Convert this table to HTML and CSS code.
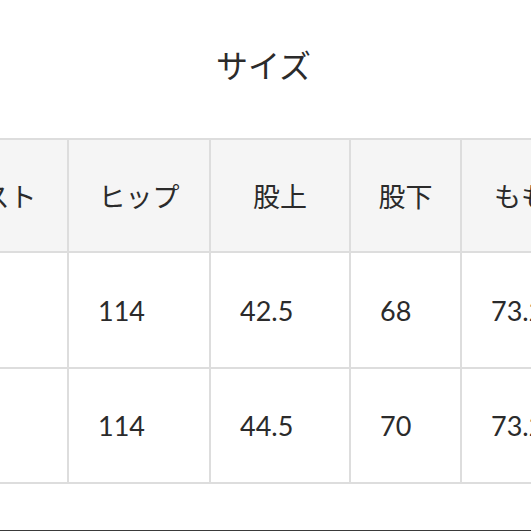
FILE: index.html
```html
<!DOCTYPE html>
<html lang="ja">
<head>
<meta charset="utf-8">
<title>サイズ</title>
<link rel="stylesheet" href="styles.css">
</head>
<body>
<div class="page">
  <h2 class="title">サイズ</h2>
  <div class="table-wrap">
    <div class="size-table">
      <div class="cell head">バスト</div>
      <div class="cell head">ヒップ</div>
      <div class="cell head">股上</div>
      <div class="cell head">股下</div>
      <div class="cell head">もも周り</div>

      <div class="cell">96</div>
      <div class="cell">114</div>
      <div class="cell">42.5</div>
      <div class="cell">68</div>
      <div class="cell">73.2</div>

      <div class="cell">96</div>
      <div class="cell">114</div>
      <div class="cell">44.5</div>
      <div class="cell">70</div>
      <div class="cell">73.2</div>
    </div>
  </div>
  <div class="bottom-rule"></div>
</div>
</body>
</html>
```
FILE: styles.css
```css
html, body {
  margin: 0;
  padding: 0;
  background: #ffffff;
}

body {
  font-family: "Lato", "Noto Sans CJK JP", sans-serif;
  color: #2b2b2b;
}

.page {
  width: 531px;
  height: 531px;
  overflow: hidden;
  display: flex;
  flex-direction: column;
}

.title {
  margin: 50px 0 0 0;
  font-size: 32px;
  line-height: 32px;
  font-weight: 400;
  text-align: center;
  color: #2b2b2b;
  padding-right: 4px;
}

.table-wrap {
  margin-top: 56px;
  width: 531px;
  overflow: hidden;
}

.size-table {
  display: grid;
  grid-template-columns: 142px 140px 138px 109px 172px;
  grid-template-rows: 111px 114px 113px;
  gap: 2px;
  background: #dddddd;
  border-top: 2px solid #dddddd;
  border-bottom: 2px solid #dddddd;
  margin-left: -75px;
  width: max-content;
}

.cell {
  background: #ffffff;
  font-size: 27px;
  display: flex;
  align-items: center;
  padding-left: 29px;
  white-space: nowrap;
}

.cell.head {
  background: #f5f5f5;
  justify-content: center;
  padding-left: 0;
}

.bottom-rule {
  margin-top: 46px;
  height: 1px;
  background: #3a3a3a;
}
```
